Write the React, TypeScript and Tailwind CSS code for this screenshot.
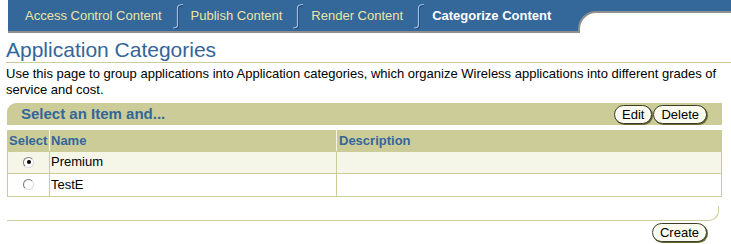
import React from "react";

function TabDivider() {
  return (
    <svg width="10" height="26" viewBox="0 0 10 26" className="shrink-0">
      <path d="M10 1.5 Q4.5 1.5 4.5 5 L4.5 22 Q4.5 25 0 25" fill="none" stroke="#1c4170" strokeWidth="1.2" transform="translate(0.8 0.8)" />
      <path d="M10 1.5 Q4.5 1.5 4.5 5 L4.5 22 Q4.5 25 0 25" fill="none" stroke="#9ec0e6" strokeWidth="1.2" />
    </svg>
  );
}

function Radio({ checked }: { checked?: boolean }) {
  return (
    <span className="flex h-[11px] w-[11px] items-center justify-center rounded-full border border-t-[#7a7a7a] border-l-[#7a7a7a] border-b-[#dcdcdc] border-r-[#dcdcdc] bg-white">
      {checked && <span className="h-[4px] w-[4px] rounded-full bg-black" />}
    </span>
  );
}

function PillButton({ label }: { label: string }) {
  return (
    <button className="flex h-[19px] items-center rounded-full border border-[#3d3d2a] bg-[#fbfbf0] px-[7px] text-[13px] leading-none text-black shadow-[1px_1px_0_#666633]">
      {label}
    </button>
  );
}

const tabs = ["Access Control Content", "Publish Content", "Render Content"];

export default function App() {
  return (
    <div className="h-[244px] w-[731px] overflow-hidden bg-white font-['Liberation_Sans',Arial,sans-serif]">
      {/* tab strip */}
      <div className="flex h-[33px] pl-[8px]">
        <div className="flex flex-1 bg-[#34679a]">
          <div className="flex h-full w-[570px] items-center border-b-2 border-[#8f8f8f] pl-[17px] text-[13px]">
            {tabs.map((t, i) => (
              <React.Fragment key={t}>
                <span className={`${i === 0 ? "" : "ml-[8px]"} text-[#ece4a4]`}>{t}</span>
                <span className="ml-[11px] pt-[1px]">
                  <TabDivider />
                </span>
              </React.Fragment>
            ))}
            <span className="ml-[8px] font-bold text-white">Categorize Content</span>
          </div>
          <div className="mt-[11px] flex-1 rounded-tl-[18px] border-t-2 border-l-2 border-[#8f8f8f] bg-white" />
        </div>
      </div>

      {/* page header */}
      <div className="ml-[6px] mt-[4px] border-b border-[#cccc99] text-[21px] leading-[25px] text-[#336699]">
        Application Categories
      </div>
      <p className="ml-[6px] mt-[3px] w-[725px] text-[13px] leading-[16px] text-black">
        Use this page to group applications into Application categories, which organize Wireless applications into different grades of service and cost.
      </p>

      {/* table region */}
      <div className="ml-[7px] mt-[5px] w-[715px]">
        <div className="flex h-[22px] items-center justify-between rounded-tl-[9px] bg-[#cccc99] pl-[14px] pr-[15px]">
          <span className="text-[15px] font-bold text-[#336699]">Select an Item and...</span>
          <div className="flex gap-[1px]">
            <PillButton label="Edit" />
            <PillButton label="Delete" />
          </div>
        </div>

        <table className="mt-[5px] w-full border-collapse border border-[#cccc99] text-[13px]">
          <thead>
            <tr className="h-[20px] bg-[#cccc99] text-left font-bold text-[#336699]">
              <th className="w-[42px] border border-[#cccc99] px-[1px] border-r-[#f5f5e6]">Select</th>
              <th className="w-[287px] border border-[#cccc99] px-[1px] border-r-[#f5f5e6]">Name</th>
              <th className="border border-[#cccc99] px-[2px]">Description</th>
            </tr>
          </thead>
          <tbody>
            <tr className="h-[22px] bg-[#f5f5e8]">
              <td className="border border-[#cccc99]">
                <div className="flex justify-center">
                  <Radio checked />
                </div>
              </td>
              <td className="border border-[#cccc99] px-[1px]">Premium</td>
              <td className="border border-[#cccc99]" />
            </tr>
            <tr className="h-[23px] bg-white">
              <td className="border border-[#cccc99]">
                <div className="flex justify-center">
                  <Radio />
                </div>
              </td>
              <td className="border border-[#cccc99] px-[1px]">TestE</td>
              <td className="border border-[#cccc99]" />
            </tr>
          </tbody>
        </table>
      </div>

      {/* footer */}
      <div className="ml-[7px] mt-[9px] h-[15px] w-[712px] rounded-br-[10px] border-b border-r border-[#cccc99]" />
      <div className="mr-[24px] mt-[2px] flex justify-end">
        <div className="h-[20px]">
          <PillButton label="Create" />
        </div>
      </div>
    </div>
  );
}
